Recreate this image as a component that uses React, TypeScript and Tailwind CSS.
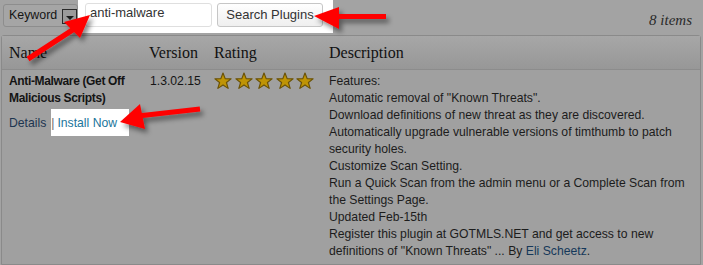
import React from 'react';

const Star: React.FC = () => (
    <svg width="18" height="18" viewBox="0 0 20 20" className="block">
        <path
            d="M10 1.2 L12.4 7.4 L19 7.6 L13.8 11.7 L15.7 18.2 L10 14.4 L4.3 18.2 L6.2 11.7 L1 7.6 L7.6 7.4 Z"
            fill="#bf9405"
            stroke="#6a5207"
            strokeWidth="1.3"
            strokeLinejoin="round"
        />
    </svg>
);

const descLines = [
    'Features:',
    'Automatic removal of "Known Threats".',
    'Download definitions of new threat as they are discovered.',
    'Automatically upgrade vulnerable versions of timthumb to patch',
    'security holes.',
    'Customize Scan Setting.',
    'Run a Quick Scan from the admin menu or a Complete Scan from',
    'the Settings Page.',
    'Updated Feb-15th',
    'Register this plugin at GOTMLS.NET and get access to new',
];

export default function App() {
    return (
        <div className="relative w-[703px] h-[265px] bg-[#a3a3a3] overflow-hidden font-['Liberation_Sans',Arial,sans-serif] text-[12.2px] text-[#1f1f1f]">
            {/* search bar */}
            <div className="flex items-start h-[35px] text-[13px]">
                <div className="mt-[4px] ml-[3px] w-[75px] h-[23px] border border-[#8d8d8d] rounded-[3px] flex items-center pl-[5px] gap-[5px] bg-[#a5a5a5] text-[12.4px]">
                    <span className="text-[#151515]">Keyword</span>
                    <span className="w-[15px] h-[15px] mt-[2px] border border-[#2a2a2a] bg-[#9a9a9a] flex items-center justify-center">
                        <span className="w-0 h-0 border-l-[4px] border-r-[4px] border-t-[4px] border-l-transparent border-r-transparent border-t-[#1a1a1a] mt-[2px]" />
                    </span>
                </div>
                <div className="bg-white h-[33px] w-[255px] flex items-start pt-[3px] pl-[7px] gap-[5px]">
                    <div className="w-[127px] h-[24px] border border-[#dfdfdf] rounded-[3px] bg-white flex items-center pl-[4px] pb-[4px] text-[#333]">
                        anti-malware
                    </div>
                    <div className="w-[106px] h-[24px] border border-[#c6c6c6] rounded-[3px] bg-gradient-to-b from-[#fefefe] to-[#efefef] flex items-center justify-center text-[#333]">
                        Search Plugins
                    </div>
                </div>
                <div className="flex-1 flex justify-end pr-[11px] pt-[9px] italic font-['Liberation_Serif',serif] text-[15px] text-[#2a2a2a]">
                    8 items
                </div>
            </div>

            {/* plugin table */}
            <div className="ml-[1px] w-[700px] border border-[#8a8a8a] rounded-t-[3px] bg-[#a0a0a0]">
                <div className="flex h-[34px] items-center bg-gradient-to-b from-[#a7a7a7] to-[#979797] border-b border-[#8c8c8c] font-['Liberation_Serif',serif] text-[16px] text-[#111]">
                    <div className="w-[139px] pl-[7px]">Name</div>
                    <div className="w-[65px] pl-[8px]">Version</div>
                    <div className="w-[115px] pl-[8px]">Rating</div>
                    <div className="flex-1 pl-[8px]">Description</div>
                </div>
                <div className="flex pt-[2px] pb-[4px] leading-[17px]">
                    <div className="w-[139px] pl-[7px]">
                        <div className="font-bold text-[12px] tracking-[-0.35px] text-[#141414] pr-[2px] pt-[1px]">
                            Anti-Malware (Get Off Malicious Scripts)
                        </div>
                        <div className="flex items-start mt-[2px]">
                            <span className="text-[#1d3550] pt-[6px]">Details</span>
                            <span className="bg-white h-[27px] w-[78px] ml-[5px] flex items-start pt-[6px]">
                                <span className="text-[#6a6a6a]">|</span>
                                <span className="text-[#21759b] ml-[3px]">Install Now</span>
                            </span>
                        </div>
                    </div>
                    <div className="w-[65px] pl-[9px] pt-[1px] text-[#151515]">1.3.02.15</div>
                    <div className="w-[115px] pl-[8px] flex gap-[2.5px] h-[19px]">
                        <Star />
                        <Star />
                        <Star />
                        <Star />
                        <Star />
                    </div>
                    <div className="flex-1 pl-[8px] pt-[1px] text-[#1c1c1c]">
                        {descLines.map((l) => (
                            <div key={l}>{l}</div>
                        ))}
                        <div>
                            definitions of "Known Threats" ... By <span className="text-[#15385a]">Eli Scheetz</span>.
                        </div>
                    </div>
                </div>
            </div>

            {/* red callout arrows */}
            <svg className="absolute left-0 top-0 pointer-events-none" width="703" height="265" viewBox="0 0 703 265">
                <defs>
                    <filter id="sh" x="-20%" y="-20%" width="150%" height="160%">
                        <feDropShadow dx="3" dy="4" stdDeviation="2.5" floodColor="#000" floodOpacity="0.45" />
                    </filter>
                </defs>
                <g fill="#ff0000" filter="url(#sh)">
                    <line x1="28" y1="59" x2="74" y2="29" stroke="#ff0000" strokeWidth="5.5" />
                    <path d="M90 15 L64 22 L80 38 Z" />
                    <line x1="334" y1="16.5" x2="386" y2="16.5" stroke="#ff0000" strokeWidth="5" />
                    <path d="M314 16 L339 7 L339 29 Z" />
                    <line x1="138" y1="116" x2="200" y2="109" stroke="#ff0000" strokeWidth="5" />
                    <path d="M120 122 L140 104 L145 129 Z" />
                </g>
            </svg>
        </div>
    );
}
